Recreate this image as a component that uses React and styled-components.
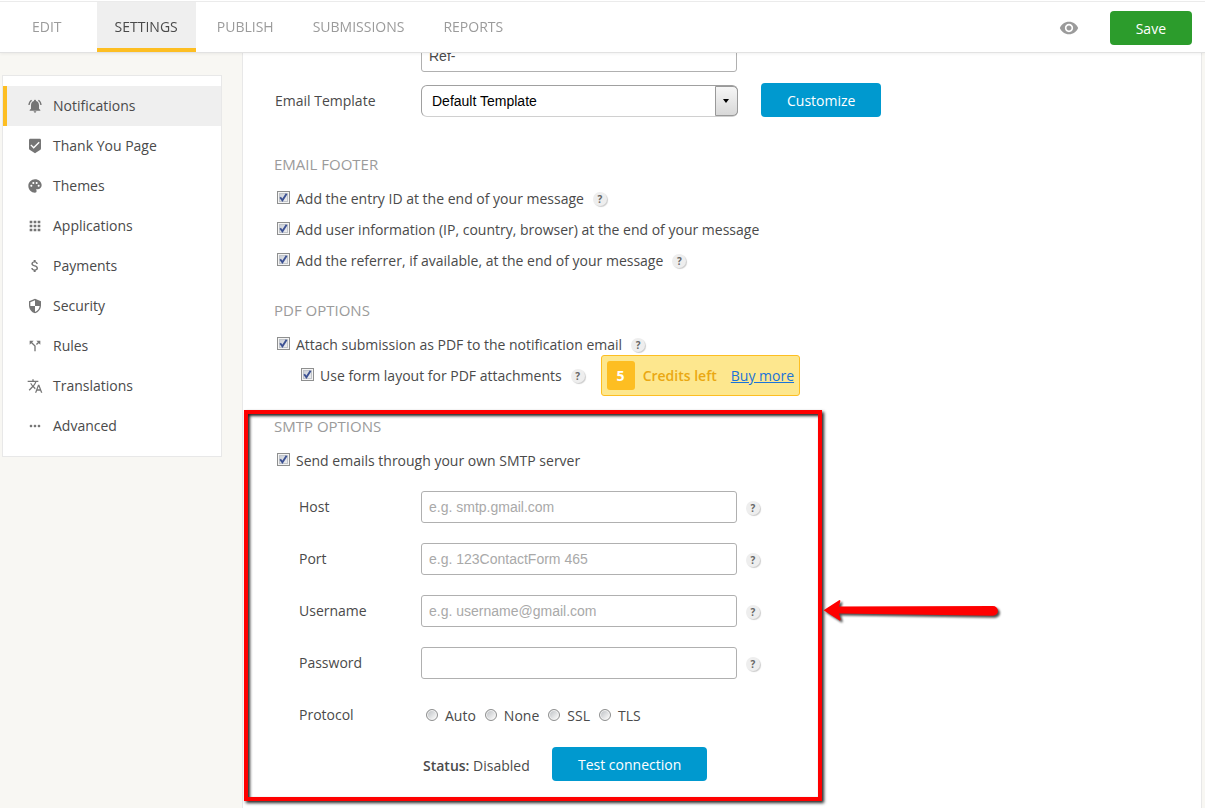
import React, { useState } from 'react';
import styled, { createGlobalStyle } from 'styled-components';
import {
    MdNotificationsActive,
    MdBeenhere,
    MdPalette,
    MdApps,
    MdAttachMoney,
    MdSecurity,
    MdCallSplit,
    MdTranslate,
    MdMoreHoriz,
    MdVisibility,
} from 'react-icons/md';

const GlobalStyle = createGlobalStyle`
    * {
        box-sizing: border-box;
    }

    body {
        margin: 0;
        background: #f8f7f3;
        color: #4a4a4a;
        font-family: 'Open Sans', sans-serif;
        font-size: 14px;
        line-height: 20px;
    }

    button, input, select {
        font-family: inherit;
        font-size: inherit;
    }
`

const TopBar = styled.header`
    position: fixed;
    top: 0;
    left: 0;
    right: 0;
    z-index: 5;
    display: flex;
    align-items: center;
    height: 53px;
    padding: 0 13px 0 14px;
    background: white;
    border-bottom: 1px solid #e2e2e2;
    box-shadow: inset 0 1px 0 white, inset 0 2px 0 #ebebeb, 0 1px 3px rgba(0, 0, 0, 0.06);
`

const Tabs = styled.nav`
    display: flex;
    align-self: stretch;
    flex: 1;
    gap: 3px;
    padding-top: 2px;
`

const Tab = styled.a`
    padding: 15px 18px 0;
    color: ${props => props.$active ? '#4a4a4a' : '#9b9b9b'};
    background: ${props => props.$active ? '#efefef' : 'none'};
    border-bottom: 4px solid ${props => props.$active ? '#fdbe22' : 'transparent'};
    text-decoration: none;

    &:first-child {
        margin-right: 14px;
    }
`

const TopActions = styled.div`
    display: flex;
    align-items: center;
    gap: 31px;
    padding-top: 4px;
`

const PreviewButton = styled.button`
    display: flex;
    padding: 0;
    background: none;
    border: none;
    color: #9b9b9b;
    font-size: 20px;
    cursor: pointer;
`

const Button = styled.button`
    height: 34px;
    padding: 0 26px;
    background: ${props => props.$green ? '#2c9c2c' : '#0099cf'};
    border: none;
    border-radius: 4px;
    color: white;
    font-weight: 500;
    cursor: pointer;
`

const Page = styled.div`
    display: flex;
    align-items: flex-start;
    gap: 20px;
    min-height: 100vh;
    padding: 0 3px 0 2px;
`

const Sidebar = styled.nav`
    flex: 0 0 220px;
    margin-top: 75px;
    padding: 10px 0;
    background: white;
    border: 1px solid #e8e8e8;
`

const SidebarLink = styled.a`
    display: flex;
    align-items: center;
    gap: 10px;
    height: 40px;
    padding-left: 20px;
    border-left: 4px solid ${props => props.$active ? '#fdbe22' : 'transparent'};
    background: ${props => props.$active ? '#efefef' : 'none'};
    color: #4a4a4a;
    text-decoration: none;

    svg {
        width: 16px;
        height: 16px;
        color: #757575;
    }
`

const Panel = styled.main`
    flex: 1;
    min-width: 0;
    min-height: 100vh;
    padding: 40px 0 6px 1px;
    background: white;
    border: 1px solid #e8e8e8;
    border-width: 0 1px;
`

const Section = styled.section`
    padding-left: 30px;
`

const SectionTitle = styled.h2`
    margin: ${props => props.$top || 0}px 0 9px;
    color: #9b9b9b;
    font-size: 15px;
    font-weight: 400;
    line-height: 20px;
`

const Field = styled.div`
    display: flex;
    align-items: ${props => props.$end ? 'flex-end' : 'center'};
    margin-bottom: ${props => props.$gap || 0}px;
`

const FieldLabel = styled.label`
    width: 147px;
    padding-left: 1px;
    line-height: 32px;
`

const TextInput = styled.input`
    width: 316px;
    height: 32px;
    padding: 0 7px;
    background: white;
    border: 1px solid #b0b0b0;
    border-radius: 3px;
    color: #4a4a4a;
    font-family: 'Liberation Sans', Arial, sans-serif;

    &::placeholder {
        color: #a9a9a9;
        opacity: 1;
    }
`

const SelectWrapper = styled.div`
    position: relative;
    width: 317px;
    height: 32px;
    margin-right: 23px;
`

const Select = styled.select`
    appearance: none;
    width: 100%;
    height: 32px;
    padding: 0 30px 0 10px;
    background: white;
    border: 1px solid #a0a0a0;
    border-bottom-color: #d0d0d0;
    border-radius: 6px;
    color: black;
    font-family: 'Liberation Sans', Arial, sans-serif;
`

const SelectArrow = styled.span`
    position: absolute;
    top: 1px;
    right: 0;
    bottom: 1px;
    display: flex;
    align-items: center;
    justify-content: center;
    width: 23px;
    background: linear-gradient(#f6f6f6, #d8d8d8);
    border: 1px solid #999;
    border-radius: 0 5px 5px 0;
    pointer-events: none;

    &::after {
        content: '';
        margin-right: 2px;
        border: 3px solid transparent;
        border-top: 4px solid black;
        border-bottom: 0;
    }
`

const CheckRow = styled.div`
    display: flex;
    align-items: center;
    height: 31px;
    padding-left: ${props => props.$nested ? '27px' : '3px'};
`

const CheckLabel = styled.label`
    display: flex;
    align-items: center;
    gap: 6px;
    white-space: nowrap;
`

const CheckBox = styled.span`
    position: relative;
    width: 13px;
    height: 13px;
    margin-bottom: 2px;

    input {
        appearance: none;
        display: block;
        width: 13px;
        height: 13px;
        margin: 0;
        background: linear-gradient(135deg, #c3c8d0, #f6f6f6);
        border: 1px solid #8e8f8f;
        box-shadow: inset 0 0 0 1px #f4f4f4, inset 0 0 0 2px #c0c4ca;
    }

    svg {
        position: absolute;
        top: 0;
        left: 0;
        display: none;
        pointer-events: none;
    }

    input:checked + svg {
        display: block;
    }
`

const HelpButton = styled.button`
    display: flex;
    align-items: center;
    justify-content: center;
    width: 14px;
    height: 14px;
    margin: 1px 0 0 9px;
    padding: 0;
    background: #eee;
    border: none;
    border-radius: 50%;
    box-shadow: 1px 1px 1px #ccc;
    color: #666;
    font-size: 10px;
    font-weight: 700;
    line-height: 14px;
    cursor: pointer;
`

const Credits = styled.div`
    display: flex;
    align-items: center;
    height: 41px;
    margin-left: 16px;
    padding: 0 5px;
    background: #fde78e;
    border: 1px solid #fdbe22;
    border-radius: 3px;
    color: #eaa812;
    font-weight: 600;
    white-space: nowrap;
`

const CreditsCount = styled.span`
    width: 28px;
    margin-right: 8px;
    background: #fdbe22;
    border-radius: 3px;
    color: white;
    font-weight: 700;
    line-height: 29px;
    text-align: center;
`

const BuyLink = styled.a`
    margin-left: 14px;
    color: #1a73d9;
    font-weight: 400;
`

const SmtpSection = styled.section`
    position: relative;
    max-width: 578px;
    margin-top: 19px;
    padding: 2px 0 10px 26px;
    border: 4px solid #fe0000;
    box-shadow: 2px 2px 3px rgba(0, 0, 0, 0.85), inset 2px 2px 3px rgba(0, 0, 0, 0.85);
`

const Arrow = styled.svg`
    position: absolute;
    top: 182px;
    left: calc(100% + 4px);
    overflow: visible;
    filter: drop-shadow(2px 2px 1px rgba(0, 0, 0, 0.7));
`

const SmtpFields = styled.div`
    margin-top: 5px;
    padding-left: 25px;
`

const SmtpField = styled(Field)`
    height: ${props => props.$height || 52}px;
`

const SmtpLabel = styled.label`
    width: 122px;
`

const RadioGroup = styled.div`
    display: flex;
    gap: 9px;
    padding-left: 5px;
`

const RadioLabel = styled.label`
    display: flex;
    align-items: center;
    gap: 7px;
    padding-top: 2px;

    input {
        appearance: none;
        width: 12px;
        height: 12px;
        margin: 0 0 2px;
        background: linear-gradient(135deg, #b8bcc0, #f4f4f4 80%);
        border: 1px solid #8e8f8f;
        border-radius: 50%;
        box-shadow: inset 0 0 0 1px #f4f4f4;
    }

    input:checked {
        background: radial-gradient(#3c5193 35%, #eee 45%);
    }
`

const Status = styled.span`
    width: 131px;
    padding: 3px 0 0 2px;

    b {
        font-weight: 600;
    }
`

const menu = [
    ['Notifications', MdNotificationsActive],
    ['Thank You Page', MdBeenhere],
    ['Themes', MdPalette],
    ['Applications', MdApps],
    ['Payments', MdAttachMoney],
    ['Security', MdSecurity],
    ['Rules', MdCallSplit],
    ['Translations', MdTranslate],
    ['Advanced', MdMoreHoriz],
]

const tabs = ['EDIT', 'SETTINGS', 'PUBLISH', 'SUBMISSIONS', 'REPORTS']

const smtpInputs = [
    { id: 'host', label: 'Host', placeholder: 'e.g. smtp.gmail.com' },
    { id: 'port', label: 'Port', placeholder: 'e.g. 123ContactForm 465' },
    { id: 'username', label: 'Username', placeholder: 'e.g. username@gmail.com' },
    { id: 'password', label: 'Password', type: 'password' },
]

const Help = () => <HelpButton type='button' aria-label='Help'>?</HelpButton>

const Option = ({ label, help, nested, children }) => {
    const [checked, setChecked] = useState(true)

    return (
        <CheckRow $nested={nested}>
            <CheckLabel>
                <CheckBox>
                    <input type='checkbox' checked={checked} onChange={() => setChecked(!checked)} />
                    <svg width='13' height='13' viewBox='0 0 13 13'>
                        <path d='M3.2 6.3 L5.4 9.3 L9.6 2.8' fill='none' stroke='#3c5193' strokeWidth='1.9' />
                    </svg>
                </CheckBox>
                {label}
            </CheckLabel>
            {help && <Help />}
            {children}
        </CheckRow>
    )
}

const App = () => {
    const [protocol, setProtocol] = useState('')

    return (
        <>
            <GlobalStyle />
            <TopBar>
                <Tabs>
                    {tabs.map(tab => (
                        <Tab key={tab} href='#' $active={tab === 'SETTINGS'}>{tab}</Tab>
                    ))}
                </Tabs>
                <TopActions>
                    <PreviewButton type='button' aria-label='Preview'><MdVisibility /></PreviewButton>
                    <Button type='button' $green>Save</Button>
                </TopActions>
            </TopBar>
            <Page>
                <Sidebar>
                    {menu.map(([name, Icon]) => (
                        <SidebarLink key={name} href='#' $active={name === 'Notifications'}>
                            <Icon />
                            {name}
                        </SidebarLink>
                    ))}
                </Sidebar>
                <Panel>
                    <Section>
                        <Field $gap={11}>
                            <FieldLabel htmlFor='prefix' />
                            <TextInput id='prefix' aria-label='Reference prefix' defaultValue='Ref-' />
                        </Field>
                        <Field $end>
                            <FieldLabel htmlFor='template'>Email Template</FieldLabel>
                            <SelectWrapper>
                                <Select id='template'>
                                    <option>Default Template</option>
                                </Select>
                                <SelectArrow />
                            </SelectWrapper>
                            <Button type='button'>Customize</Button>
                        </Field>

                        <SectionTitle $top={37}>EMAIL FOOTER</SectionTitle>
                        <Option label='Add the entry ID at the end of your message' help />
                        <Option label='Add user information (IP, country, browser) at the end of your message' />
                        <Option label='Add the referrer, if available, at the end of your message' help />

                        <SectionTitle $top={24}>PDF OPTIONS</SectionTitle>
                        <Option label='Attach submission as PDF to the notification email' help />
                        <Option label='Use form layout for PDF attachments' help nested>
                            <Credits>
                                <CreditsCount>5</CreditsCount>
                                Credits left
                                <BuyLink href='#'>Buy more</BuyLink>
                            </Credits>
                        </Option>
                    </Section>

                    <SmtpSection>
                        <SectionTitle>SMTP OPTIONS</SectionTitle>
                        <Option label='Send emails through your own SMTP server' />
                        <SmtpFields>
                            {smtpInputs.map(field => (
                                <SmtpField key={field.id}>
                                    <SmtpLabel htmlFor={field.id}>{field.label}</SmtpLabel>
                                    <TextInput id={field.id} type={field.type || 'text'} placeholder={field.placeholder} />
                                    <Help />
                                </SmtpField>
                            ))}
                            <SmtpField>
                                <SmtpLabel as='span' id='protocol'>Protocol</SmtpLabel>
                                <RadioGroup role='radiogroup' aria-labelledby='protocol'>
                                    {['Auto', 'None', 'SSL', 'TLS'].map(name => (
                                        <RadioLabel key={name}>
                                            <input
                                                type='radio'
                                                name='protocol'
                                                checked={protocol === name}
                                                onChange={() => setProtocol(name)}
                                            />
                                            {name}
                                        </RadioLabel>
                                    ))}
                                </RadioGroup>
                            </SmtpField>
                            <SmtpField $height={46}>
                                <SmtpLabel as='span' />
                                <Status><b>Status:</b> Disabled</Status>
                                <Button type='button'>Test connection</Button>
                            </SmtpField>
                        </SmtpFields>
                        <Arrow width='178' height='28' viewBox='0 0 178 28' aria-hidden='true'>
                            <path
                                d='M1.5 14.3 L17.5 4 Q18.8 4 18.3 5.5 L17 10.6 L171 10 A4.8 4.8 0 0 1 171 19.8 L17 17.6 L18.6 23 Q18.8 25 17.2 24.3 Z'
                                fill='#fe0000'
                            />
                        </Arrow>
                    </SmtpSection>
                </Panel>
            </Page>
        </>
    )
}

export default App
